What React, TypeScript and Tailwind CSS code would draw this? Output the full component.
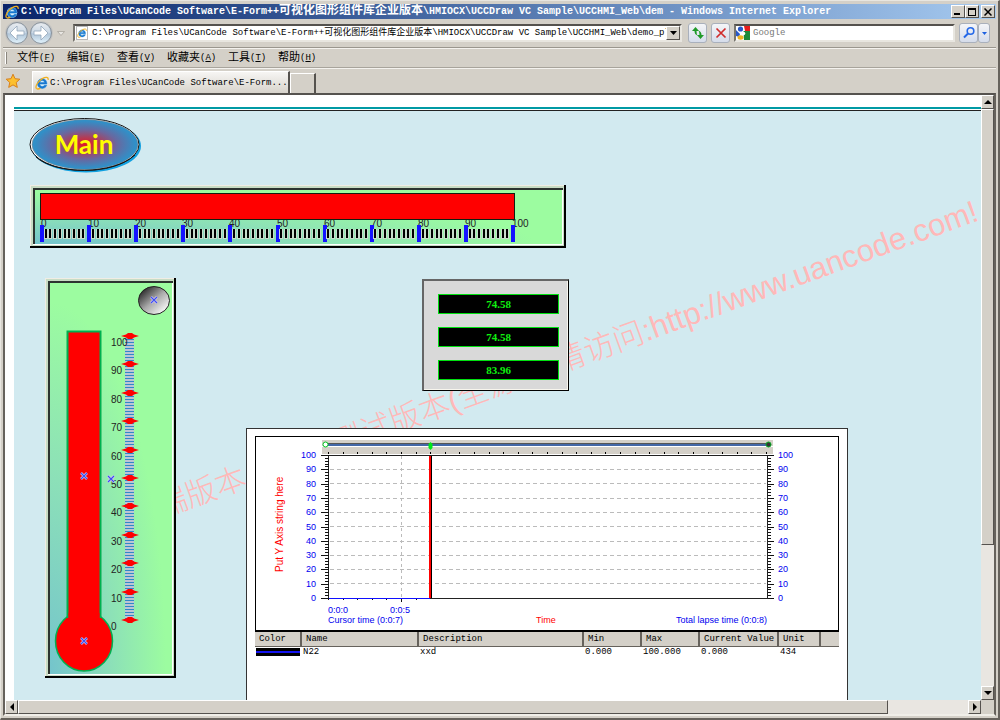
import type { ReactNode } from "react";

const MONO = "font-['Liberation_Mono','Noto_Sans_CJK_SC',monospace]";
const SANS = "font-['Liberation_Sans','Noto_Sans_CJK_SC',sans-serif]";

const RAISED =
  "border border-t-white border-l-white border-r-[#55524e] border-b-[#55524e] bg-[#d4d0c8]";

const range = (n: number) => Array.from({ length: n }, (_, i) => i);

const PATH =
  "C:\\Program Files\\UCanCode Software\\E-Form++可视化图形组件库企业版本\\HMIOCX\\UCCDraw VC Sample\\UCCHMI_Web\\demo_pl";

const MENUS = [
  ["文件", "F"],
  ["编辑", "E"],
  ["查看", "V"],
  ["收藏夹", "A"],
  ["工具", "T"],
  ["帮助", "H"],
];

const COLUMNS = [
  { label: "Color", width: "w-[46px]" },
  { label: "Name", width: "w-[117px]" },
  { label: "Description", width: "w-[165px]" },
  { label: "Min", width: "w-[58px]" },
  { label: "Max", width: "w-[58px]" },
  { label: "Current Value", width: "w-[79px]" },
  { label: "Unit", width: "w-[42px]" },
  { label: "", width: "" },
];

function IeIcon({ className }: { className?: string }) {
  return (
    <svg viewBox="0 0 16 16" className={className} aria-hidden>
      <circle cx="8" cy="8.500" r="6" fill="#d8f0fc" />
      <path
        d="M13.6 9.2H5.4c.2 1.8 1.4 2.8 3 2.8 1.1 0 1.900-.5 2.400-1.300h2.600c-.8 2.200-2.700 3.500-5.100 3.500-3.200 0-5.500-2.300-5.500-5.500s2.400-5.600 5.500-5.600c3.200 0 5.400 2.400 5.300 6.100ZM5.500 7.300h5.400C10.700 5.900 9.700 5 8.300 5S5.800 5.900 5.500 7.300Z"
        fill="#1878d0"
        stroke="#1878d0"
        strokeWidth=".6"
      />
      <path
        d="M15 4.500C15.600 1.400 12.600.6 8.400 3 3.600 5.800.1 11.400 1.400 14c.8 1.400 2.800 1 4.700-.2"
        fill="none"
        stroke="#f0b020"
        strokeWidth="1.500"
      />
    </svg>
  );
}

function TitleBar() {
  return (
    <header className="flex h-[15px] items-center bg-linear-to-r from-[#0a246a] to-[#a6caf0] pl-0.5 pr-px text-white">
      <IeIcon className="h-3.5 w-3.5 shrink-0" />
      <h1 className={`${MONO} ml-0.5 flex-1 overflow-hidden whitespace-pre text-[10px] leading-[15px] font-bold`}>
        C:\Program Files\UCanCode Software\E-Form++
        <span className="text-xs leading-[15px]">可视化图形组件库企业版本</span>
        \HMIOCX\UCCDraw VC Sample\UCCHMI_Web\dem - Windows Internet Explorer
      </h1>
      <div className="flex">
        <button aria-label="Minimize" className={`${RAISED} flex h-[13px] w-3.5 items-end justify-center pb-0.5`}>
          <span className="mr-0.5 h-0.5 w-1.5 bg-black" />
        </button>
        <button aria-label="Maximize" className={`${RAISED} flex h-[13px] w-3.5 items-center justify-center`}>
          <span className="h-2 w-2 border border-t-2 border-black" />
        </button>
        <button aria-label="Close" className={`${RAISED} ml-0.5 flex h-[13px] w-3.5 items-center justify-center`}>
          <svg viewBox="0 0 8 8" className="h-2 w-2">
            <path d="M.5.5l7 7M7.500.5l-7 7" stroke="#000" strokeWidth="1.500" />
          </svg>
        </button>
      </div>
    </header>
  );
}

function RoundArrow({ label, flip }: { label: string; flip?: boolean }) {
  return (
    <button aria-label={label} className="h-6 w-6">
      <svg viewBox="0 0 24 24" className="h-6 w-6">
        <circle cx="12" cy="12" r="10.500" fill="url(#orb)" stroke="#8a939c" />
        <path d="M2.500 12a9.500 9.500 0 0 1 19 0q-9.500 3-19 0Z" fill="#fff" opacity=".35" />
        <path
          d={flip ? "M12 5l7 7-7 7v-5H5v-4h7Z" : "M12 5l-7 7 7 7v-5h7v-4h-7Z"}
          fill="#fff"
          stroke="#93a6ba"
          strokeWidth=".8"
        />
      </svg>
    </button>
  );
}

const TOOL =
  "flex items-center justify-center rounded-[3px] border border-[#a9b0bc] bg-linear-to-b from-[#f4f5f8] to-[#d5dcea]";

function NavRow() {
  return (
    <div className="flex h-[29px] items-center border-b border-[#9a968e] pl-0.5 pr-1.5">
      <svg width="0" height="0" aria-hidden>
        <defs>
          <linearGradient id="orb" x1="0" y1="0" x2="0" y2="1">
            <stop offset="0" stopColor="#dfe3e8" />
            <stop offset=".5" stopColor="#adc2d6" />
            <stop offset="1" stopColor="#e2f3fc" />
          </linearGradient>
        </defs>
      </svg>
      <div className="flex rounded-full bg-[#c4c3c1]">
        <RoundArrow label="Back" />
        <RoundArrow label="Forward" flip />
      </div>
      <button aria-label="Recent pages" className="ml-0.5 flex h-4 w-3 items-center justify-center">
        <svg viewBox="0 0 8 5" className="h-[5px] w-2">
          <path d="M.5.5h7L4 4.500Z" fill="#e8e6e2" stroke="#a8a49c" strokeWidth=".8" />
        </svg>
      </button>

      <div className="ml-1.5 flex h-[18px] min-w-0 flex-1 items-center border-2 border-t-[#55524e] border-l-[#77746e] border-r-[#e8e6e0] border-b-[#e8e6e0] bg-white pl-px">
        <span className="flex h-3.5 w-3 shrink-0 items-center border border-[#b8b8b8] bg-white">
          <IeIcon className="h-2.5 w-2.5" />
        </span>
        <input
          aria-label="Address"
          defaultValue={PATH}
          className={`${MONO} ml-1 h-3.5 min-w-0 flex-1 text-[9px] leading-[14px] text-black outline-none`}
        />
        <button aria-label="Show addresses" className={`${RAISED} flex h-3.5 w-3.5 shrink-0 items-center justify-center`}>
          <svg viewBox="0 0 7 4" className="h-1 w-[7px]">
            <path d="M0 0h7L3.500 4Z" />
          </svg>
        </button>
      </div>

      <button aria-label="Refresh" className={`${TOOL} ml-1.5 h-5 w-[19px]`}>
        <svg viewBox="0 0 14 14" className="h-3.5 w-3.5" fill="#1f9a28">
          <path d="M4.500 1L8 5H5.500q0 3 1 4.500Q3.500 8.500 3.500 5H1Z" />
          <path d="M9.500 13L6 9h2.500q0-3-1-4.500 3 1 3 4.500H13Z" />
        </svg>
      </button>
      <button aria-label="Stop" className={`${TOOL} ml-1 h-5 w-[19px]`}>
        <svg viewBox="0 0 12 12" className="h-3 w-3">
          <path d="M1.500 1.500l9 9M10.500 1.500l-9 9" stroke="#d02c2c" strokeWidth="1.700" />
        </svg>
      </button>

      <div className="ml-1 flex h-[18px] w-[221px] items-center border-2 border-t-[#55524e] border-l-[#77746e] border-r-[#e8e6e0] border-b-[#e8e6e0] bg-white">
        <svg viewBox="0 0 14 14" className="h-3.5 w-3.5 shrink-0" aria-hidden>
          <path d="M0 0h14v14H0Z" fill="#fff" />
          <path d="M8 0h6v5H9Z" fill="#e81c1c" />
          <path d="M7.500 5H14v9H8Z" fill="#1f8a38" />
          <circle cx="4.500" cy="3" r="2.600" fill="#2858c8" />
          <path d="M0 4l4 4-1 3-3-1Z" fill="#2858c8" />
          <ellipse cx="4.500" cy="11.500" rx="3" ry="2.200" fill="#f0b420" />
          <circle cx="7.500" cy="7.500" r="1.800" fill="#fff" />
        </svg>
        <input
          aria-label="Search"
          placeholder="Google"
          className={`${MONO} ml-[3px] h-3.5 min-w-0 flex-1 text-[9px] leading-[14px] outline-none placeholder:text-[#777]`}
        />
      </div>
      <div className="ml-1 flex">
        <button aria-label="Go" className={`${TOOL} h-5 w-[19px]`}>
          <svg viewBox="0 0 14 14" className="h-3.5 w-3.5" fill="none" stroke="#2468e8">
            <circle cx="8.500" cy="5" r="3.300" strokeWidth="1.600" />
            <path d="M6 7.500L2 11.500" strokeWidth="2" />
          </svg>
        </button>
        <button aria-label="Search options" className={`${TOOL} h-5 w-3`}>
          <svg viewBox="0 0 5 3" className="h-[3px] w-[5px]">
            <path d="M0 0h5L2.500 3Z" fill="#1c60e0" />
          </svg>
        </button>
      </div>
    </div>
  );
}

function MenuRow() {
  return (
    <nav className="flex h-5 items-center border-t border-b border-t-[#f4f2ee] border-b-[#a8a49c] pl-0.5">
      <span className="mr-2.5 h-3 w-0.5 border-r border-[#8a867e] bg-white" />
      <ul className="flex gap-3.5">
        {MENUS.map(([label, key]) => (
          <li key={key}>
            <button className={`${MONO} flex items-center text-[9px] leading-4 text-black`}>
              <span className="text-[11px] leading-4">{label}</span>
              <span className="w-3.5 whitespace-nowrap">
                (<u>{key}</u>)
              </span>
            </button>
          </li>
        ))}
      </ul>
    </nav>
  );
}

function TabRow() {
  return (
    <div className="flex h-[25px] items-end border-t border-[#f4f2ee] pl-0.5">
      <button aria-label="Favorites" className="mb-1 h-4 w-4">
        <svg viewBox="0 0 16 16" className="h-4 w-4">
          <path
            d="M8 1.200l2 4.500 4.800.5-3.600 3.300 1.100 4.900L8 11.900l-4.300 2.500 1.100-4.900L1.200 6.200 6 5.700Z"
            fill="#fcc030"
            stroke="#d8801c"
          />
        </svg>
      </button>
      <div className="ml-[11px] flex h-[22px] w-[258px] items-center border-t border-r-2 border-l border-t-white border-l-white border-r-[#55524e] bg-linear-to-b from-[#f6f5f3] to-[#d8d4cc] pl-0.5">
        <IeIcon className="h-3.5 w-3.5 shrink-0" />
        <a href="#page" className={`${MONO} ml-px whitespace-pre text-[9px] leading-[14px] text-black`}>
          C:\Program Files\UCanCode Software\E-Form...
        </a>
      </div>
      <button
        aria-label="New tab"
        className="h-5 w-[26px] border-t border-r-2 border-l border-t-white border-l-white border-r-[#55524e]"
      />
    </div>
  );
}

function ScrollButton({ label, d }: { label: string; d: string }) {
  return (
    <button aria-label={label} className={`${RAISED} flex h-3.5 w-[13px] shrink-0 items-center justify-center`}>
      <svg viewBox="0 0 8 8" className="h-2 w-2">
        <path d={d} />
      </svg>
    </button>
  );
}

function Cross({ x, y }: { x: number; y: number }) {
  return (
    <g>
      <path
        d={`M${x - 3} ${y - 3}l6 6M${x + 3} ${y - 3}l-6 6`}
        stroke="#d8c8f0"
        strokeWidth="2.500"
        fill="none"
      />
      <path
        d={`M${x - 3} ${y - 3}l6 6M${x + 3} ${y - 3}l-6 6`}
        stroke="#3c50f0"
        strokeWidth="1.200"
        fill="none"
      />
    </g>
  );
}

// Bevelled green plate shared by both gauges
function Plate({ w, h }: { w: number; h: number }) {
  return (
    <g shapeRendering="crispEdges">
      <rect width={w} height={h} fill="#f0ede4" />
      <path d={`M${w - 2} 0h2v${h}h-${w}v-2h${w - 2}Z`} fill="#000" />
      <rect x="1" y="1" width={w - 3} height={h - 3} fill="#c8dcc4" />
      <rect x="3" y="3" width={w - 6} height={h - 6} fill="#fff" />
      <path d={`M3 3h${w - 6}v2H5v${h - 9}H3Z`} fill="#2c3430" />
      <rect x="5" y="5" width={w - 9} height={h - 9} fill="url(#plate)" />
    </g>
  );
}

function MainButton() {
  return (
    <button className="absolute top-[6px] left-[14px] h-[56px] w-[114px]">
      <svg viewBox="0 0 114 56" className="h-full w-full">
        <defs>
          <radialGradient id="oval">
            <stop offset="0" stopColor="#e01828" />
            <stop offset=".25" stopColor="#b83850" />
            <stop offset=".6" stopColor="#6868a0" />
            <stop offset=".95" stopColor="#3090c8" />
          </radialGradient>
        </defs>
        <ellipse cx="58" cy="29" rx="55" ry="26.500" fill="#10a0e0" />
        <ellipse cx="56.500" cy="27.500" rx="54.500" ry="26" fill="#fff" stroke="#111" />
        <ellipse cx="57" cy="27.500" rx="53" ry="25" fill="url(#oval)" stroke="#888" strokeWidth=".6" />
        <path d="M8 40C28 58 85 58 107 38" fill="none" stroke="#151515" />
        <text
          x="56"
          y="37"
          textAnchor="middle"
          fill="#ff0"
          className="font-['Lato',sans-serif] text-[26px] font-bold"
        >
          Main
        </text>
      </svg>
    </button>
  );
}

function BarGauge() {
  return (
    <svg viewBox="0 0 536 63" className={`${SANS} absolute top-[74px] left-4 h-[63px] w-[536px]`}>
      <defs>
        <radialGradient id="plate" cx="0" cy="1" r="1">
          <stop offset="0" stopColor="#74c4cc" />
          <stop offset=".5" stopColor="#8ce0b8" />
          <stop offset=".95" stopColor="#9cfca0" />
        </radialGradient>
      </defs>
      <Plate w={536} h={63} />
      <g className="text-[10px]" fill="#222">
        {range(11).map((i) => (
          <text key={i} x={11 + Math.round(i * 47.1)} y="42">
            {i * 10}
          </text>
        ))}
      </g>
      <rect x="10.500" y="8.500" width="474" height="26" fill="#f00" stroke="#102010" />
      <g shapeRendering="crispEdges">
        {range(101).map((i) =>
          i % 10 === 0 ? (
            <rect key={i} x={10 + Math.round(i * 4.71)} y="40" width="4" height="17" fill="#1414ff" />
          ) : (
            <g key={i}>
              <rect x={9 + Math.round(i * 4.71)} y="44" width="4" height="10" fill="#c8dccc" />
              <rect x={10 + Math.round(i * 4.71)} y="44" width="2" height="9" fill="#000" />
            </g>
          ),
        )}
      </g>
    </svg>
  );
}

function Thermometer() {
  return (
    <svg viewBox="0 0 131 400" className={`${SANS} absolute top-[167px] left-[31px] h-[400px] w-[131px]`}>
      <defs>
        <linearGradient id="ball" x1="0.100" y1="0.100" x2=".9" y2=".9">
          <stop offset="0" stopColor="#222" />
          <stop offset=".5" stopColor="#aaa" />
          <stop offset="1" stopColor="#fff" />
        </linearGradient>
      </defs>
      <Plate w={131} h={400} />
      <ellipse cx="109" cy="22.500" rx="15.500" ry="14" fill="url(#ball)" stroke="#222" />
      <ellipse cx="39" cy="363" rx="28.500" ry="30" fill="#f00" stroke="#00b050" strokeWidth="1.500" />
      <path d="M22.500 340V53.500h33V340" fill="#f00" stroke="#00b050" strokeWidth="2" />
      <rect x="23.500" y="335" width="31" height="12" fill="#f00" />
      <g shapeRendering="crispEdges">
        <rect x="80" y="60" width="9" height="282" fill="#bcc4d4" />
        {range(94).map((i) => (
          <rect key={i} x="80" y={61 + i * 3} width="9" height="1" fill="#3088c8" />
        ))}
      </g>
      <g className="text-[10px]" fill="#222">
        {range(11).map((i) => (
          <text key={i} x="66" y={68 + Math.round(i * 28.4)}>
            {100 - i * 10}
          </text>
        ))}
      </g>
      {range(11).map((i) => (
        <path
          key={i}
          transform={`translate(85 ${58 + Math.round(i * 28.4)})`}
          d="M-9 0L-4-1.500-2-3H2L4-1.500 9 0 4 1.500 2 3H-2L-4 1.500Z"
          fill="#f00"
        />
      ))}
      <Cross x={109} y={22} />
      <Cross x={39} y={198} />
      <Cross x={66} y={201} />
      <Cross x={39} y={363} />
    </svg>
  );
}

function Readout({ children }: { children: ReactNode }) {
  return (
    <output className="h-5 border border-[#00e010] bg-black text-center font-['Liberation_Serif',serif] text-[11px] leading-[18px] font-bold text-[#10f010]">
      {children}
    </output>
  );
}

function Readouts() {
  return (
    <div className="absolute top-[168px] left-[408px] w-[147px] border-t-2 border-l-2 border-r border-b border-t-[#666] border-l-[#666] border-r-black border-b-black">
      <div className="flex flex-col gap-[13px] border-r border-b border-[#f8f6ee] bg-[#d9d9d9] pt-[13px] pr-2 pb-[9px] pl-3.5">
        <Readout>74.58</Readout>
        <Readout>74.58</Readout>
        <Readout>83.96</Readout>
      </div>
    </div>
  );
}

// Trend plot: 0-100 on both axes, time running left to right
function TrendPlot() {
  return (
    <svg viewBox="0 0 582 193" className={`${SANS} block h-[193px] w-full text-[9px]`}>
      <g shapeRendering="crispEdges">
        <rect x="66" y="3" width="451" height="14" fill="#d4d0c8" />
        <rect x="72" y="6" width="440" height="1" fill="#555" />
        <rect x="72" y="7" width="440" height="2" fill="#4468a8" />
        <rect x="66" y="9" width="451" height="1" fill="#fff" />
        {range(31).map((i) => (
          <rect key={i} x={72 + Math.round(i * 14.6)} y="15" width="1" height="2" fill="#000" />
        ))}
        {range(9).map((i) => (
          <path key={i} d={`M74 ${32.5 + Math.round(i * 14.3)}h436`} stroke="#bbb" strokeDasharray="4 3" />
        ))}
        <path d="M145.500 19v142" stroke="#bbb" strokeDasharray="3 3" />
        <rect x="72.500" y="18.500" width="439" height="143" fill="none" stroke="#222" />
        {range(51).map((i) => (
          <g key={i}>
            <rect x={i % 5 ? 69 : 65} y={18 + Math.round(i * 2.86)} width={i % 5 ? 4 : 8} height="1" fill="#111" />
            <rect x="512" y={18 + Math.round(i * 2.86)} width={i % 5 ? 3 : 6} height="1" fill="#111" />
          </g>
        ))}
        {range(7).map((i) => (
          <rect key={i} x={72 + Math.round(i * 14.6)} y="161" width="1" height={i === 5 ? 4 : 2} fill="#111" />
        ))}
        <path d="M73 161.500h101" stroke="#1010ff" />
        <rect x="173" y="19" width="2" height="142" fill="#f00" />
        <rect x="175" y="19" width="1" height="142" fill="#000" />
      </g>
      <circle cx="69.500" cy="7.500" r="2.500" fill="#fff" stroke="#00c820" />
      <path d="M174.500 5l2 2v4l-2 2-2-2V7Z" fill="#00e818" />
      <circle cx="512.500" cy="7.500" r="2.500" fill="#333" stroke="#00b020" />
      <g fill="#0000f0">
        {range(11).map((i) => (
          <g key={i}>
            <text x="60" y={21 + Math.round(i * 14.3)} textAnchor="end">
              {100 - i * 10}
            </text>
            <text x="522" y={21 + Math.round(i * 14.3)}>
              {100 - i * 10}
            </text>
          </g>
        ))}
        <text x="72" y="176">0:0:0</text>
        <text x="144" y="176" textAnchor="middle">
          0:0:5
        </text>
        <text x="72" y="186">Cursor time (0:0:7)</text>
        <text x="511" y="186" textAnchor="end">
          Total lapse time (0:0:8)
        </text>
      </g>
      <g fill="#f00">
        <text x="280" y="186">Time</text>
        <text transform="translate(27 135) rotate(-90)" className="text-[10px]">
          Put Y Axis string here
        </text>
      </g>
    </svg>
  );
}

function TrendPanel() {
  return (
    <section className="absolute top-[317px] bottom-0 left-[232px] w-[602px] overflow-hidden border border-b-0 border-[#333] bg-white px-2 pt-[7px]">
      <div className="border border-b-2 border-black">
        <TrendPlot />
      </div>
      <table className={`${MONO} w-full table-fixed border-collapse text-left text-[9px] text-black`}>
        <thead>
          <tr className="h-3.5 bg-[#d4d0c8]">
            {COLUMNS.map((col) => (
              <th
                key={col.label}
                className={`${col.width} border-r-2 border-b border-[#66625c] pt-px pl-1 leading-3 font-normal whitespace-nowrap last:border-r-0`}
              >
                {col.label}
              </th>
            ))}
          </tr>
        </thead>
        <tbody>
          <tr className="leading-[10px]">
            <td className="px-px">
              <div className="flex h-2 items-center bg-black">
                <div className="h-0.5 w-full bg-[#1414f0]" />
              </div>
            </td>
            <td className="pl-0.5">N22</td>
            <td className="pl-0.5">xxd</td>
            <td className="pl-0.5">0.000</td>
            <td className="pl-0.5">100.000</td>
            <td className="pl-0.5">0.000</td>
            <td className="pl-0.5">434</td>
            <td />
          </tr>
        </tbody>
      </table>
    </section>
  );
}

function Canvas() {
  return (
    <div className="relative flex-1 overflow-hidden bg-[#d2eaf0]">
      <svg className={`${SANS} absolute inset-0 h-full w-full text-[31px] font-light`}>
        <text transform="translate(966 109) rotate(-20)" textAnchor="end" fill="#ffb8b8">
          高端版本，此为测试版本(全源码)请访问:http://www.uancode.com!
        </text>
      </svg>
      <MainButton />
      <BarGauge />
      <Thermometer />
      <Readouts />
      <TrendPanel />
    </div>
  );
}

export default function App() {
  return (
    <div className="flex h-screen flex-col overflow-hidden border-t border-r-2 border-b-2 border-l border-t-[#e8e6e0] border-r-[#66625c] border-b-[#66625c] border-l-[#e8e6e0] bg-[#d4d0c8] px-0.5 pt-[3px] pb-0.5">
      <TitleBar />
      <NavRow />
      <MenuRow />
      <TabRow />
      <div className="flex min-h-0 flex-1 flex-col border-2 border-t-[#55524e] border-l-[#66625c] border-r-[#66625c] border-b-[#f0eee8]">
        <div className="flex min-h-0 flex-1">
          <main id="page" className="flex min-w-0 flex-1 flex-col bg-white pt-3 pl-[9px]">
            <div className="h-1 border-t-2 border-b border-t-[#009aa4] border-b-[#222]" />
            <Canvas />
          </main>
          <div className="flex w-[13px] flex-col bg-[#e9e6e1]">
            <ScrollButton label="Scroll up" d="M4 2l4 4H0Z" />
            <div className={`${RAISED} h-[72%]`} />
            <div className="flex-1" />
            <ScrollButton label="Scroll down" d="M0 2h8L4 6Z" />
          </div>
        </div>
        <div className="flex h-3.5 bg-[#e9e6e1]">
          <ScrollButton label="Scroll left" d="M6 0v8L2 4Z" />
          <div className={`${RAISED} w-[88%]`} />
          <div className="flex-1" />
          <ScrollButton label="Scroll right" d="M2 0l4 4-4 4Z" />
          <div className="w-[13px] bg-[#d4d0c8]" />
        </div>
      </div>
    </div>
  );
}
